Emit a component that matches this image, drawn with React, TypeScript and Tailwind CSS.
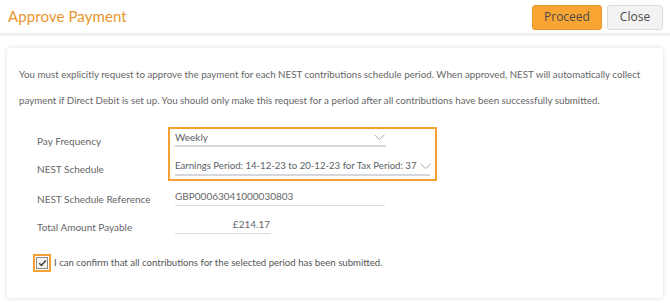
import React from "react";

function Chevron() {
  return (
    <svg width="11" height="7" viewBox="0 0 11 7" className="shrink-0">
      <polyline points="0.5,0.8 5.5,5.6 10.5,0.8" fill="none" stroke="#a3a8b0" strokeWidth="1" />
    </svg>
  );
}

export default function App() {
  return (
    <div className="w-[670px] h-[303px] bg-white overflow-hidden font-['Lato',sans-serif] text-[#666]">
      <div className="flex items-center justify-between h-[33px] pl-[8px] pr-[7px]">
        <div className="text-[15px] text-[#e8952c] font-['Lato',sans-serif] tracking-[0.1px]">Approve Payment</div>
        <div className="flex items-center gap-[5px] pt-[1px]">
          <button className="w-[70px] h-[25px] rounded-[3px] bg-[#f9a533] border border-[#e9962e] text-[#4a4a4a] text-[12px] font-['Open_Sans',sans-serif]">
            Proceed
          </button>
          <button className="w-[56px] h-[25px] rounded-[3px] bg-[#f3f3f3] border border-[#dcdcdc] text-[#4a4a4a] text-[12px] font-['Open_Sans',sans-serif]">
            Close
          </button>
        </div>
      </div>
      <div className="h-[3px] bg-[#f0f0f0]" />
      <div className="mx-[7px] mt-[12px] h-[250px] rounded-[4px] bg-white shadow-[0_0_5px_rgba(0,0,0,0.14)] px-[12px] pt-[13px]">
        <p className="text-[9.75px] leading-[26px] text-[#666]">
          You must explicitly request to approve the payment for each NEST contributions schedule period. When approved, NEST will automatically collect payment if Direct Debit is set up. You should only make this request for a period after all contributions have been successfully submitted.
        </p>
        <div className="flex items-start mt-[14px]">
          <div className="w-[149px] pl-[18px] pt-[7px] flex flex-col gap-[14px] text-[10px] leading-[14px]">
            <div>Pay Frequency</div>
            <div>NEST Schedule</div>
          </div>
          <div className="border-2 border-[#f5a031] pl-[5px] pr-[5px] pt-[1px] pb-[3px] flex flex-col gap-[12px]">
            <div className="w-[211px] h-[17px] border-b-2 border-[#d3d7de] flex items-start justify-between pr-[1px] text-[10px] leading-[14px] text-[#5a5f66]">
              <span>Weekly</span>
              <span className="pt-[4px]"><Chevron /></span>
            </div>
            <div className="w-[255px] h-[17px] border-b-2 border-[#d3d7de] flex items-start justify-between gap-[4px] text-[9.6px] leading-[14px] text-[#5a5f66] whitespace-nowrap">
              <span>Earnings Period: 14-12-23 to 20-12-23 for Tax Period: 37</span>
              <span className="pt-[4px]"><Chevron /></span>
            </div>
          </div>
        </div>
        <div className="flex items-start mt-[8px]">
          <div className="w-[156px] pl-[18px] pt-[3px] text-[10px] leading-[14px]">NEST Schedule Reference</div>
          <div className="w-[210px] h-[17px] border-b border-[#dcdcdc] text-[10px] leading-[14px] text-[#666]">GBP00063041000030803</div>
        </div>
        <div className="flex items-start mt-[11px]">
          <div className="w-[156px] pl-[18px] pt-[3px] text-[10px] leading-[14px]">Total Amount Payable</div>
          <div className="w-[96px] h-[17px] border-b border-[#dcdcdc] text-[10px] leading-[14px] text-[#666] text-right pr-[1px]">£214.17</div>
        </div>
        <div className="flex items-center mt-[20px] pl-[14px]">
          <div className="w-[18px] h-[18px] border-2 border-[#f5a031] flex items-center justify-center">
            <div className="w-[12px] h-[12px] border border-[#8a8a8a] bg-[#f4f4f4] flex items-center justify-center">
              <svg width="9" height="8" viewBox="0 0 9 8">
                <polyline points="1.2,4.2 3.4,6.3 7.8,1.4" fill="none" stroke="#444" strokeWidth="1.5" />
              </svg>
            </div>
          </div>
          <span className="ml-[3px] text-[9.6px] leading-[14px] text-[#555]">I can confirm that all contributions for the selected period has been submitted.</span>
        </div>
      </div>
    </div>
  );
}
